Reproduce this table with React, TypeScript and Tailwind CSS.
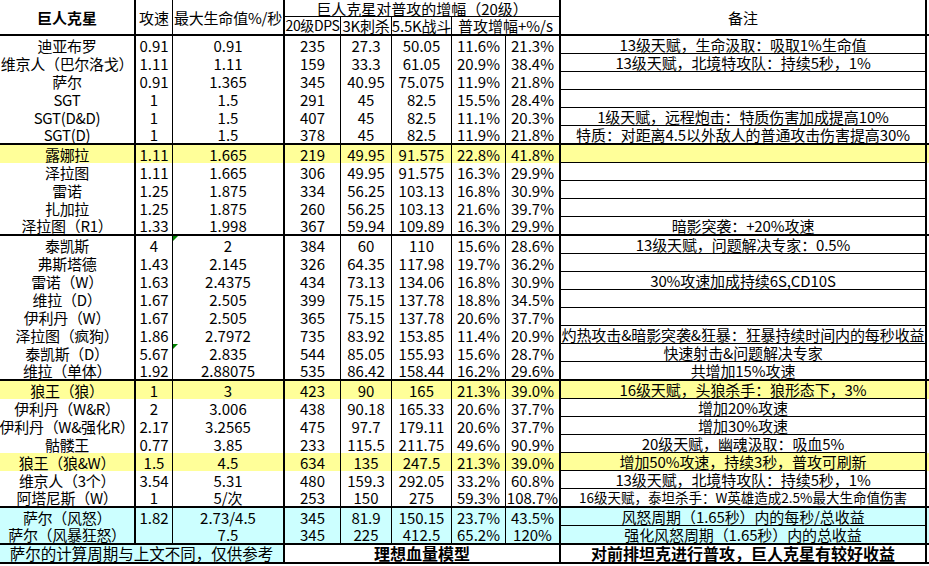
import React from 'react';

type Row = {
  name: string;
  v: string[];
  note?: string;
  bg?: 'y' | 'c';
  end?: boolean;
  small?: boolean;
  mark?: boolean;
};

const rows: Row[] = [
  { name: '迪亚布罗', v: ['0.91', '0.91', '235', '27.3', '50.05', '11.6%', '21.3%'], note: '13级天赋，生命汲取：吸取1%生命值' },
  { name: '维京人（巴尔洛戈）', v: ['1.11', '1.11', '159', '33.3', '61.05', '20.9%', '38.4%'], note: '13级天赋，北境特攻队：持续5秒，1%' },
  { name: '萨尔', v: ['0.91', '1.365', '345', '40.95', '75.075', '11.9%', '21.8%'] },
  { name: 'SGT', v: ['1', '1.5', '291', '45', '82.5', '15.5%', '28.4%'] },
  { name: 'SGT(D&D)', v: ['1', '1.5', '407', '45', '82.5', '11.1%', '20.3%'], note: '1级天赋，远程炮击：特质伤害加成提高10%' },
  { name: 'SGT(D)', v: ['1', '1.5', '378', '45', '82.5', '11.9%', '21.8%'], note: '特质：对距离4.5以外敌人的普通攻击伤害提高30%', end: true },
  { name: '露娜拉', v: ['1.11', '1.665', '219', '49.95', '91.575', '22.8%', '41.8%'], bg: 'y' },
  { name: '泽拉图', v: ['1.11', '1.665', '306', '49.95', '91.575', '16.3%', '29.9%'] },
  { name: '雷诺', v: ['1.25', '1.875', '334', '56.25', '103.13', '16.8%', '30.9%'] },
  { name: '扎加拉', v: ['1.25', '1.875', '260', '56.25', '103.13', '21.6%', '39.7%'] },
  { name: '泽拉图（R1）', v: ['1.33', '1.998', '367', '59.94', '109.89', '16.3%', '29.9%'], note: '暗影突袭：+20%攻速', end: true },
  { name: '泰凯斯', v: ['4', '2', '384', '60', '110', '15.6%', '28.6%'], note: '13级天赋，问题解决专家：0.5%', mark: true },
  { name: '弗斯塔德', v: ['1.43', '2.145', '326', '64.35', '117.98', '19.7%', '36.2%'] },
  { name: '雷诺（W）', v: ['1.63', '2.4375', '434', '73.13', '134.06', '16.8%', '30.9%'], note: '30%攻速加成持续6S,CD10S' },
  { name: '维拉（D）', v: ['1.67', '2.505', '399', '75.15', '137.78', '18.8%', '34.5%'] },
  { name: '伊利丹（W）', v: ['1.67', '2.505', '365', '75.15', '137.78', '20.6%', '37.7%'] },
  { name: '泽拉图（疯狗）', v: ['1.86', '2.7972', '735', '83.92', '153.85', '11.4%', '20.9%'], note: '灼热攻击&暗影突袭&狂暴：狂暴持续时间内的每秒收益' },
  { name: '泰凯斯（D）', v: ['5.67', '2.835', '544', '85.05', '155.93', '15.6%', '28.7%'], note: '快速射击&问题解决专家', mark: true },
  { name: '维拉（单体）', v: ['1.92', '2.88075', '535', '86.42', '158.44', '16.2%', '29.6%'], note: '共增加15%攻速', end: true },
  { name: '狼王（狼）', v: ['1', '3', '423', '90', '165', '21.3%', '39.0%'], note: '16级天赋，头狼杀手：狼形态下，3%', bg: 'y' },
  { name: '伊利丹（W&R）', v: ['2', '3.006', '438', '90.18', '165.33', '20.6%', '37.7%'], note: '增加20%攻速' },
  { name: '伊利丹（W&强化R）', v: ['2.17', '3.2565', '475', '97.7', '179.11', '20.6%', '37.7%'], note: '增加30%攻速' },
  { name: '骷髅王', v: ['0.77', '3.85', '233', '115.5', '211.75', '49.6%', '90.9%'], note: '20级天赋，幽魂汲取：吸血5%' },
  { name: '狼王（狼&W）', v: ['1.5', '4.5', '634', '135', '247.5', '21.3%', '39.0%'], note: '增加50%攻速，持续3秒，普攻可刷新', bg: 'y' },
  { name: '维京人（3个）', v: ['3.54', '5.31', '480', '159.3', '292.05', '33.2%', '60.8%'], note: '13级天赋，北境特攻队：持续5秒，1%' },
  { name: '阿塔尼斯（W）', v: ['1', '5/次', '253', '150', '275', '59.3%', '108.7%'], note: '16级天赋，泰坦杀手：W英雄造成2.5%最大生命值伤害', small: true, end: true },
  { name: '萨尔（风怒）', v: ['1.82', '2.73/4.5', '345', '81.9', '150.15', '23.7%', '43.5%'], note: '风怒周期（1.65秒）内的每秒/总收益', bg: 'c' },
  { name: '萨尔（风暴狂怒）', v: ['', '7.5', '345', '225', '412.5', '65.2%', '120%'], note: '强化风怒周期（1.65秒）内的总收益', bg: 'c', end: true },
];

// widths include each cell's right border
const valCols = [
  'w-[37px] border-r',
  'w-[112px] border-r-2',
  'w-[56px] border-r',
  'w-[51px] border-r',
  'w-[60px] border-r',
  'w-[54px] border-r',
  'w-[55px] border-r-2',
];

const cell = 'flex items-center justify-center whitespace-nowrap border-black shrink-0 leading-[15px]';

const DataRow = ({ row }: { row: Row }) => {
  const bg = row.bg === 'y' ? 'bg-[#ffff99]' : row.bg === 'c' ? 'bg-[#ccffff]' : 'bg-white';
  return (
    <div className={`flex border-black ${row.end ? 'h-[19px] border-b-2' : 'h-[18px]'} ${bg}`}>
      <div className={`${cell} w-[136px] border-r-2 tracking-[-0.3px]`}>{row.name}</div>
      {row.v.map((v, i) => (
        <div key={i} className={`${cell} ${valCols[i]} relative`}>
          {row.mark && i === 1 && (
            <span className="absolute left-0 top-0 w-0 h-0 border-t-[5px] border-r-[5px] border-t-[#008000] border-r-transparent" />
          )}
          {v}
        </div>
      ))}
      <div
        className={`${cell} w-[366px] border-r-2 ${row.end ? '' : 'border-b'} ${
          row.small ? 'text-[13.5px]' : 'tracking-[-0.1px]'
        }`}
      >
        {row.note}
      </div>
    </div>
  );
};

export default function App() {
  return (
    <div className="w-[929px] h-[566px] overflow-hidden bg-white text-black text-[15px] font-['Noto_Sans_CJK_SC',sans-serif]">
      {/* Header */}
      <div className="flex h-[36px] border-b-2 border-black">
        <div className={`${cell} w-[136px] border-r-2 font-bold`}>巨人克星</div>
        <div className={`${cell} w-[37px] border-r`}>攻速</div>
        <div className={`${cell} w-[112px] border-r-2 tracking-[-0.2px]`}>最大生命值%/秒</div>
        <div className="flex flex-col w-[276px] shrink-0 border-r-2 border-black">
          <div className={`${cell} h-[17px] border-b pt-[1px]`}>巨人克星对普攻的增幅（20级）</div>
          <div className="flex flex-1">
            <div className={`${cell} w-[56px] border-r text-[14px] tracking-[-0.4px]`}>20级DPS</div>
            <div className={`${cell} w-[51px] border-r tracking-[-0.2px]`}>3K刺杀</div>
            <div className={`${cell} w-[60px] border-r tracking-[-0.2px]`}>5.5K战斗</div>
            <div className={`${cell} flex-1`}>普攻增幅+%/s</div>
          </div>
        </div>
        <div className={`${cell} w-[366px] border-r-2`}>备注</div>
      </div>

      {rows.map((r) => (
        <DataRow key={r.name} row={r} />
      ))}

      {/* Footer */}
      <div className="flex h-[19px] border-b-2 border-black">
        <div className={`${cell} w-[285px] border-r-2 bg-[#ccffff] text-[15.5px]`}>萨尔的计算周期与上文不同，仅供参考</div>
        <div className={`${cell} w-[276px] border-r-2 font-bold text-[16px]`}>理想血量模型</div>
        <div className={`${cell} w-[366px] border-r-2 font-bold text-[16px]`}>对前排坦克进行普攻，巨人克星有较好收益</div>
      </div>
    </div>
  );
}
